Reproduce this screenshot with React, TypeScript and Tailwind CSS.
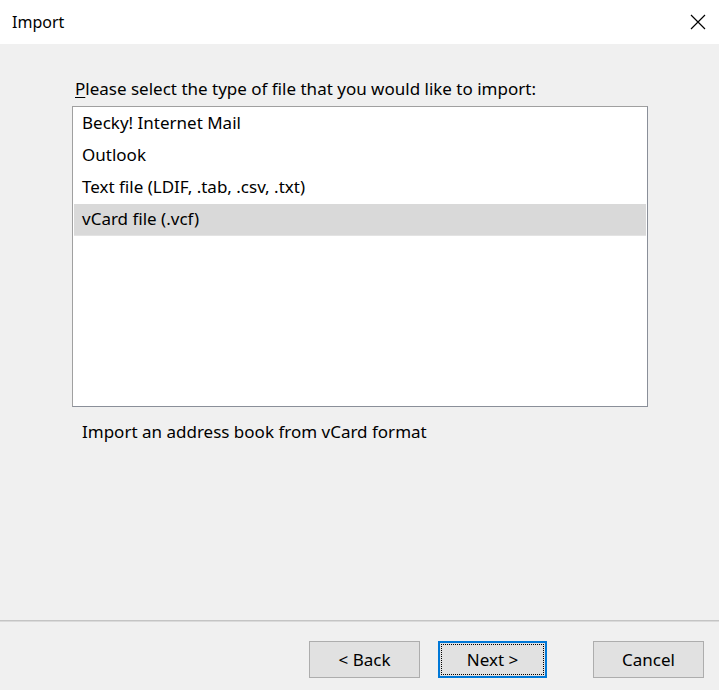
import React from 'react';

const items = [
  'Becky! Internet Mail',
  'Outlook',
  'Text file (LDIF, .tab, .csv, .txt)',
  'vCard file (.vcf)',
];

export default function App() {
  const selected = 3;
  return (
    <div
      className="w-[719px] h-[690px] flex flex-col bg-[#f0f0f0] text-black text-[17px]"
      style={{ fontFamily: '"Noto Sans", "Open Sans", sans-serif' }}
    >
      {/* Title bar */}
      <div className="h-[44px] bg-white flex items-center justify-between pl-[12px] pr-[13px]">
        <span className="text-[16px] leading-none">Import</span>
        <svg width="16" height="16" viewBox="0 0 16 16" className="text-black">
          <path d="M1 1 L15 15 M15 1 L1 15" stroke="currentColor" strokeWidth="1.2" />
        </svg>
      </div>

      {/* Body */}
      <div className="flex-1 flex flex-col pl-[72px] pr-[71px]">
        <p className="mt-[33px] pl-[3px] leading-[24px] h-[29px]">
          <span className="underline underline-offset-2">P</span>lease select the type of file that you would like to import:
        </p>
        <div className="h-[301px] bg-white border border-[#a0a0a0] border-r-[#8a8f99] border-b-[#8a8f99] p-px">
          {items.map((it, i) => (
            <div
              key={it}
              className={`h-[32px] flex items-center pl-[8px] pb-[2px] ${
                i === selected ? 'bg-[#d9d9d9] border-b border-[#e3e3e3]' : ''
              }`}
            >
              {it}
            </div>
          ))}
        </div>
        <p className="mt-[13px] pl-[10px] leading-[24px]">Import an address book from vCard format</p>
      </div>

      {/* Footer */}
      <div className="h-[2px] bg-[#c4c4c4] border-b border-[#dadada]" />
      <div className="h-[68px] flex items-start pt-[19px] pl-[309px]">
        <button className="w-[111px] h-[37px] bg-[#e1e1e1] border border-[#adadad]">&lt; Back</button>
        <button className="ml-[18px] w-[109px] h-[37px] bg-[#e1e1e1] border-2 border-[#0078d7] p-px">
          <span className="flex items-center justify-center w-full h-full border border-dotted border-black">
            Next &gt;
          </span>
        </button>
        <button className="ml-[46px] w-[111px] h-[37px] bg-[#e1e1e1] border border-[#adadad]">Cancel</button>
      </div>
    </div>
  );
}
